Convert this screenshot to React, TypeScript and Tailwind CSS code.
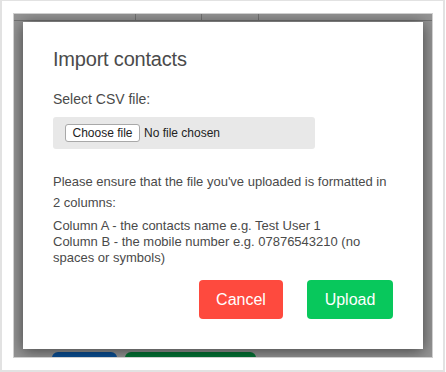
export default function App() {
  const font = { fontFamily: '"Liberation Sans", Arial, Helvetica, sans-serif' };
  return (
    <div
      className="w-[445px] h-[372px] bg-white border-2 border-t border-[#e2e2e2] pl-[11px] pt-[12px]"
      style={font}
    >
      <div className="relative w-[420px] h-[345px] border border-[#cfcfcf] overflow-hidden flex items-center justify-center">
        {/* page behind the dialog */}
        <div className="absolute inset-0 bg-white">
          <div className="flex h-[7px] border-b border-[#c4c4c4]">
            <div className="w-[122px] border-r border-[#c4c4c4]" />
            <div className="w-[66px] border-r border-[#c4c4c4]" />
            <div className="w-[57px] border-r border-[#c4c4c4]" />
          </div>
          <div className="absolute left-[38px] top-[338px] flex gap-[8px]">
            <div className="w-[65px] h-[30px] rounded-[6px] bg-[#1388ff]" />
            <div className="w-[131px] h-[30px] rounded-[6px] bg-[#08c85c]" />
          </div>
        </div>
        {/* overlay */}
        <div className="absolute inset-0 bg-black/[0.42]" />
        {/* dialog */}
        <div className="relative w-[400px] h-[327px] bg-white shadow-[0_2px_14px_rgba(0,0,0,0.55)] px-[30px] pt-[25px] text-[#4a4a4a]">
          <h1 className="text-[20px] leading-[24px] tracking-[-0.2px] text-[#4b4b4b]">Import contacts</h1>
          <div className="mt-[18px] text-[14px] leading-[20px]">Select CSV file:</div>
          <div className="mt-[8px] w-[262px] h-[32px] rounded-[3px] bg-[#e8e8e8] flex items-center pl-[12px] text-[12px] text-[#222]">
            <div className="w-[75px] h-[18px] rounded-[3px] border border-[#a8a8a8] bg-white flex items-center justify-center leading-none">
              Choose file
            </div>
            <span className="ml-[4px]">No file chosen</span>
          </div>
          <p className="mt-[22px] text-[13px] leading-[21px] whitespace-nowrap">
            Please ensure that the file you've uploaded is formatted in
            <br />
            2 columns:
          </p>
          <p className="mt-[5px] text-[13px] leading-[16px] whitespace-nowrap">
            Column A - the contacts name e.g. Test User 1
            <br />
            Column B - the mobile number e.g. 07876543210 (no
            <br />
            spaces or symbols)
          </p>
          <div className="mt-[14px] flex justify-end gap-[24px]">
            <button className="w-[84px] h-[39px] rounded-[4px] bg-[#fe4a3e] text-white text-[16px]">Cancel</button>
            <button className="w-[86px] h-[39px] rounded-[4px] bg-[#08c85c] text-white text-[16px]">Upload</button>
          </div>
        </div>
      </div>
    </div>
  );
}
